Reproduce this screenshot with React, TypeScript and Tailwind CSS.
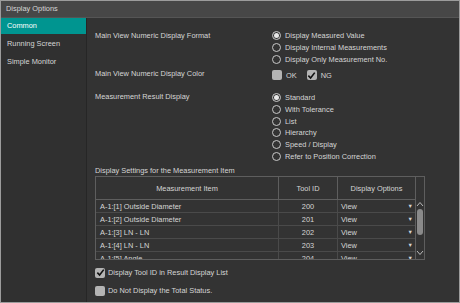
const font = { fontFamily: '"Liberation Sans", Arial, sans-serif' };

const Radio = ({ on, label }: { on?: boolean; label: string }) => (
  <div className="flex items-center h-[11.7px] gap-[4px]">
    <span className="w-[9px] h-[9px] rounded-full border border-[#c8c8c8] flex items-center justify-center shrink-0">
      {on && <span className="w-[5px] h-[5px] rounded-full bg-[#e8e8e8]" />}
    </span>
    <span>{label}</span>
  </div>
);

const Check = ({ on }: { on?: boolean }) => (
  <span className="w-[10px] h-[10px] rounded-[2px] bg-[#b4b4b4] flex items-center justify-center shrink-0">
    {on && (
      <svg width="9" height="9" viewBox="0 0 10 10">
        <path d="M1.5 5.2 L4 7.8 L8.6 1.8" stroke="#111" strokeWidth="1.8" fill="none" />
      </svg>
    )}
  </span>
);

const rows = [
  ["A-1:[1] Outside Diameter", "200"],
  ["A-1:[2] Outside Diameter", "201"],
  ["A-1:[3] LN - LN", "202"],
  ["A-1:[4] LN - LN", "203"],
  ["A-1:[5] Angle", "204"],
];

export default function App() {
  return (
    <div
      style={font}
      className="w-[460px] h-[303px] bg-[#333333] border border-[#9c9c9c] text-[#d6d6d6] text-[7.4px] flex flex-col overflow-hidden"
    >
      <div className="h-[17px] bg-[#474747] border-b border-[#555] flex items-center px-[5px] shrink-0">
        Display Options
      </div>
      <div className="flex flex-1">
        <div className="w-[86px] bg-[#303030] border-r border-[#262626] flex flex-col gap-[1px] shrink-0">
          <div className="h-[16px] bg-[#009590] text-white flex items-center pl-[6px]">Common</div>
          <div className="h-[17px] flex items-center pl-[6px]">Running Screen</div>
          <div className="h-[18px] flex items-center pl-[6px]">Simple Monitor</div>
        </div>
        <div className="flex-1 pl-[8px] pt-[12px]">
          <div className="flex">
            <div className="w-[177px] shrink-0 leading-[12px]">Main View Numeric Display Format</div>
            <div className="flex flex-col">
              <Radio on label="Display Measured Value" />
              <Radio label="Display Internal Measurements" />
              <Radio label="Display Only Measurement No." />
            </div>
          </div>
          <div className="flex mt-[4px] h-[12px] items-center">
            <div className="w-[177px] shrink-0 -mt-[4px]">Main View Numeric Display Color</div>
            <div className="flex items-center gap-[4px]">
              <Check />
              <span className="mr-[6px]">OK</span>
              <Check on />
              <span>NG</span>
            </div>
          </div>
          <div className="flex mt-[11px]">
            <div className="w-[177px] shrink-0 -mt-[1px]">Measurement Result Display</div>
            <div className="flex flex-col">
              <Radio on label="Standard" />
              <Radio label="With Tolerance" />
              <Radio label="List" />
              <Radio label="Hierarchy" />
              <Radio label="Speed / Display" />
              <Radio label="Refer to Position Correction" />
            </div>
          </div>
          <div className="mt-[4px] h-[10px] leading-[10px]">Display Settings for the Measurement Item</div>
          <div className="w-[330px] h-[84px] border border-[#5e5e5e] flex overflow-hidden">
            <div className="w-[319px] flex flex-col">
              <div className="h-[23px] flex border-b border-[#5e5e5e] shrink-0">
                <div className="w-[183px] border-r border-[#5e5e5e] flex items-center justify-center">Measurement Item</div>
                <div className="w-[59px] border-r border-[#5e5e5e] flex items-center justify-center">Tool ID</div>
                <div className="flex-1 flex items-center justify-center">Display Options</div>
              </div>
              {rows.map(([name, id]) => (
                <div key={id} className="h-[13px] flex border-b border-[#4a4a4a] shrink-0">
                  <div className="w-[183px] border-r border-[#4a4a4a] flex items-center pl-[4px]">{name}</div>
                  <div className="w-[59px] border-r border-[#4a4a4a] flex items-center justify-center">{id}</div>
                  <div className="flex-1 flex items-center pl-[3px] pr-[2px] justify-between">
                    <span>View</span>
                    <span className="text-[5.5px]">▼</span>
                  </div>
                </div>
              ))}
            </div>
            <div className="flex-1 border-l border-[#5e5e5e] flex flex-col items-center pt-[24px]">
              <svg width="8" height="6" viewBox="0 0 8 6">
                <path d="M1 5 L4 1.5 L7 5" stroke="#bbb" strokeWidth="1" fill="none" />
              </svg>
              <div className="w-[6px] h-[26px] rounded-full bg-[#8a8a8a] mt-[2px]" />
              <div className="flex-1" />
              <svg width="8" height="6" viewBox="0 0 8 6" className="mb-[3px]">
                <path d="M1 1 L4 4.5 L7 1" stroke="#bbb" strokeWidth="1" fill="none" />
              </svg>
            </div>
          </div>
          <div className="flex items-center gap-[3px] mt-[7px] h-[11px]">
            <Check on />
            <span>Display Tool ID in Result Display List</span>
          </div>
          <div className="flex items-center gap-[3px] mt-[7px] h-[11px]">
            <Check />
            <span>Do Not Display the Total Status.</span>
          </div>
        </div>
      </div>
    </div>
  );
}
